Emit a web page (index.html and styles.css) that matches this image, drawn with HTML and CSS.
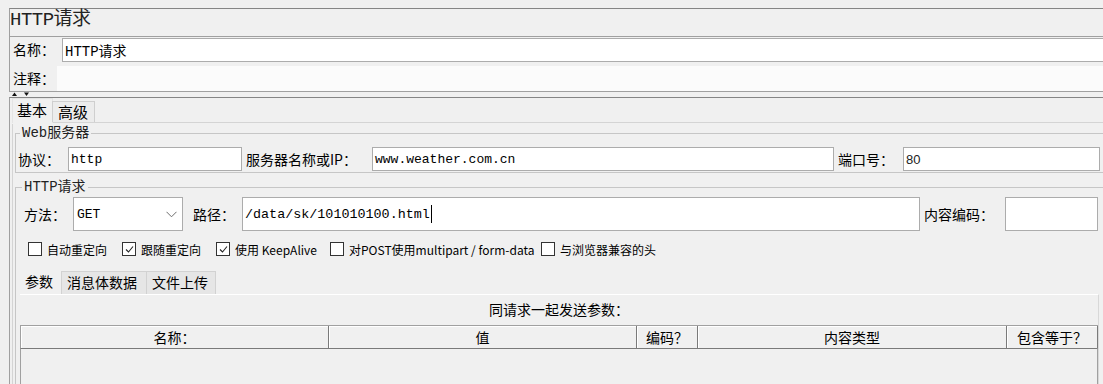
FILE: index.html
```html
<!DOCTYPE html>
<html lang="zh-CN">
<head>
<meta charset="utf-8">
<title>HTTP请求</title>
<link rel="stylesheet" href="styles.css">
</head>
<body>
<div class="app">
  <section class="head">
    <div class="title">HTTP请求</div>
    <div class="meta">
      <div class="name-row"><span class="lbl">名称：</span><div class="field name-field">HTTP请求</div></div>
      <div class="comment-row"><span class="lbl">注释：</span><div class="comment"></div></div>
    </div>
  </section>
  <div class="divider">
    <svg width="20" height="5" viewBox="0 0 20 5"><polygon points="0,4 2.5,0.5 5,4" fill="#111"/><polygon points="12,0.5 17,0.5 14.5,4" fill="#111"/></svg>
  </div>
  <section class="tabpane">
    <div class="tabs"><div class="tab active">基本</div><div class="tab">高级</div></div>
    <div class="tabbody">
      <fieldset class="group web">
        <legend>Web服务器</legend>
        <div class="web-grid">
          <span class="lbl">协议：</span><div class="field mono">http</div>
          <span class="lbl pad">服务器名称或IP：</span><div class="field mono">www.weather.com.cn</div>
          <span class="lbl pad">端口号：</span><div class="field sans">80</div>
        </div>
      </fieldset>
      <fieldset class="group req">
        <legend>HTTP请求</legend>
        <div class="req-grid">
          <span class="lbl">方法：</span>
          <div class="field select mono"><span>GET</span><svg width="11" height="7" viewBox="0 0 11 7"><polyline points="0.5,0.8 5.5,5.8 10.5,0.8" fill="none" stroke="#6d6d6d" stroke-width="1"/></svg></div>
          <span class="lbl pad2">路径：</span>
          <div class="field path mono">/data/sk/101010100.html<span class="caret"></span></div>
          <span class="lbl pad">内容编码：</span>
          <div class="field"></div>
        </div>
        <div class="checks">
          <label class="check"><span class="box"></span>自动重定向</label>
          <label class="check"><span class="box"><svg width="11" height="11" viewBox="0 0 11 11"><polyline points="2,5.5 4.5,8 9,2.5" fill="none" stroke="#222" stroke-width="1.1"/></svg></span>跟随重定向</label>
          <label class="check"><span class="box"><svg width="11" height="11" viewBox="0 0 11 11"><polyline points="2,5.5 4.5,8 9,2.5" fill="none" stroke="#222" stroke-width="1.1"/></svg></span>使用 KeepAlive</label>
          <label class="check"><span class="box"></span>对POST使用multipart / form-data</label>
          <label class="check"><span class="box"></span>与浏览器兼容的头</label>
        </div>
        <div class="params">
          <div class="subtabs">
            <div class="subtab active">参数</div>
            <div class="subtab">消息体数据</div>
            <div class="subtab">文件上传</div>
          </div>
          <div class="params-body">
            <div class="caption">同请求一起发送参数：</div>
            <div class="table">
              <div class="thead">
                <div class="th">名称：</div>
                <div class="th">值</div>
                <div class="th">编码？</div>
                <div class="th">内容类型</div>
                <div class="th">包含等于？</div>
              </div>
              <div class="tbody"></div>
            </div>
          </div>
        </div>
      </fieldset>
    </div>
  </section>
</div>
</body>
</html>
```
FILE: styles.css
```css
* { box-sizing: border-box; margin: 0; padding: 0; }
html, body { background: #f0f0f0; overflow: hidden; }
body {
  width: 1103px;
  height: 384px;
  font-family: "Noto Sans CJK SC", "Liberation Sans", sans-serif;
  font-size: 14px;
  color: #000;
}
.app { width: 1112px; }

/* header block */
.head {
  margin: 8px 0 0 9px;
  border-top: 1px solid #858585;
  border-left: 1px solid #a0a0a0;
}
.title {
  height: 27px;
  line-height: 22px;
  font-family: "Liberation Mono", "Noto Sans CJK SC", monospace;
  font-size: 19px;
  letter-spacing: -0.5px;
  color: #222;
  white-space: nowrap;
}
.meta {
  border-top: 1px solid #a0a0a0;
  border-bottom: 1px solid #a0a0a0;
}
.name-row { display: flex; height: 25px; }
.name-row .lbl { width: 52px; padding-left: 3px; line-height: 25px; }
.name-field {
  flex: 1;
  margin-top: 1px;
  height: 24px;
  font-family: "Liberation Mono", "Noto Sans CJK SC", monospace;
  font-size: 14px;
}
.comment-row { display: flex; align-items: flex-end; height: 29px; }
.comment-row .lbl { width: 47px; padding-left: 3px; line-height: 25px; }
.comment { flex: 1; height: 25px; background: #fbfbfb; }

.lbl { white-space: nowrap; }

.field {
  background: #fff;
  border: 1px solid #acacac;
  padding-left: 2px;
  display: flex;
  align-items: center;
  white-space: nowrap;
}
.mono { font-family: "Liberation Mono", "Noto Sans CJK SC", monospace; font-size: 13px; }
.sans { font-family: "Liberation Sans", sans-serif; font-size: 13px; color: #222; }

.divider { height: 5px; padding-left: 12px; display: flex; align-items: flex-end; }
.divider svg { display: block; }

/* main tabbed pane */
.tabpane {
  margin-left: 9px;
  border-top: 1px solid #858585;
  border-left: 1px solid #a0a0a0;
  padding-left: 2px;
}
.tabs { display: flex; height: 25px; border-bottom: 1px solid #d4d4d4; align-items: flex-end; }
.tab {
  font-size: 15px;
  line-height: 20px;
  height: 21px;
  width: 43px;
  padding: 0 5px;
  border: 1px solid #cfcfcf;
  border-bottom: none;
  background: #ececec;
  margin-left: -1px;
  white-space: nowrap;
}
.tab.active {
  height: 25px;
  line-height: 22px;
  width: 41px;
  padding: 0 4px;
  margin-left: 0;
  background: #f0f0f0;
  border-color: #e4e4e4;
  margin-bottom: -1px;
}

.tabbody { border-left: 1px solid #d4d4d4; padding-left: 2px; }

.group {
  border: 1px solid #c6c6c6;
  border-right: none;
  min-width: 0;
  padding: 0;
}
.group legend {
  margin-left: 2px;
  padding: 0 2px;
  font-family: "Liberation Mono", "Noto Sans CJK SC", monospace;
  font-size: 14px;
  line-height: 18px;
  color: #222;
  white-space: nowrap;
}
.web { margin-top: 1px; padding: 5px 0 1px 2px; }
.web-grid {
  display: grid;
  grid-template-columns: 50px 174px 130px 462px 69px 197px;
  height: 24px;
  align-items: center;
}
.web-grid .field { height: 24px; }
.pad { padding-left: 4px; }
.pad2 { padding-left: 10px; }

.req { margin-top: 5px; padding: 1px 0 0 4px; border-bottom: none; }
.req-grid {
  display: grid;
  grid-template-columns: 49px 110px 59px 678px 85px 93px;
  height: 34px;
  margin-left: 4px;
  align-items: center;
}
.req-grid .field { height: 34px; }
.select { justify-content: space-between; padding: 0 5px 0 3px; font-size: 13px; }
.select svg { display: block; }
.path { font-size: 13.4px; }
.caret { display: inline-block; width: 1px; height: 18px; background: #000; margin-left: 1px; }

.checks {
  display: grid;
  grid-template-columns: 94px 94px 114px 211px auto;
  height: 24px;
  margin: 6px 0 0 8px;
  align-items: center;
  font-size: 12px;
}
.check { display: flex; align-items: center; gap: 5px; white-space: nowrap; }
.box {
  width: 14px;
  height: 14px;
  border: 1px solid #333;
  background: #fff;
  display: flex;
  align-items: center;
  justify-content: center;
}
.box svg { display: block; }

/* parameters sub tab */
.params { margin-top: 9px; width: 1079px; }
.subtabs { display: flex; height: 24px; align-items: flex-end; }
.subtab {
  height: 23px;
  line-height: 21px;
  padding: 0 5px;
  font-size: 14px;
  border: 1px solid #d2d2d2;
  border-bottom: none;
  background: #e6e6e6;
  margin-left: -1px;
  white-space: nowrap;
}
.subtab.active {
  height: 24px;
  width: 42px;
  margin-left: 0;
  padding: 0 4px;
  border-color: #f0f0f0;
  background: #f0f0f0;
}
.subtab:nth-child(2) { width: 86px; }
.subtab:nth-child(3) { width: 70px; }
.params-body { border-top: 1px solid #fff; border-right: 1px solid #d8d8d8; }
.caption { height: 30px; line-height: 28px; text-align: center; }
.table { width: 1078px; }
.thead {
  display: grid;
  grid-template-columns: 308px 308px 61px 309px 91px;
  height: 24px;
  border: 1px solid #a0a0a0;
  border-bottom-color: #7a7a7a;
}
.th {
  border-right: 1px solid #7a7a7a;
  box-shadow: inset 1px 1px 0 #fff;
  text-align: center;
  line-height: 22px;
  white-space: nowrap;
}
.tbody { height: 60px; border-left: 1px solid #a0a0a0; border-right: 1px solid #a0a0a0; }
```
